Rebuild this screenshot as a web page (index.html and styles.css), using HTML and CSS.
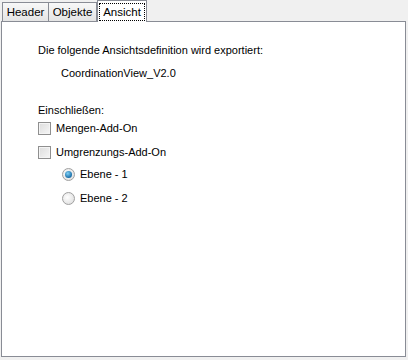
FILE: index.html
```html
<!DOCTYPE html>
<html lang="de">
<head>
    <meta charset="UTF-8">
    <title>Ansicht</title>
    <link rel="stylesheet" href="styles.css">
</head>
<body>
    <div class="tabs">
        <div class="tab">Header</div>
        <div class="tab">Objekte</div>
        <div class="tab active"><span class="focus">Ansicht</span></div>
    </div>

    <div class="panel">
        <p class="info">Die folgende Ansichtsdefinition wird exportiert:</p>
        <p class="view-name">CoordinationView_V2.0</p>

        <p class="include">Einschließen:</p>
        <label class="check"><span class="box"></span>Mengen-Add-On</label>
        <label class="check"><span class="box"></span>Umgrenzungs-Add-On</label>

        <div class="levels">
            <label class="radio"><span class="dot checked"></span>Ebene - 1</label>
            <label class="radio"><span class="dot"></span>Ebene - 2</label>
        </div>
    </div>
</body>
</html>
```

FILE: styles.css
```css
body {
    margin: 0;
    padding: 0;
    width: 408px;
    height: 360px;
    background-color: #f0f0f0;
    font-family: 'Liberation Sans', Arial, sans-serif;
    font-size: 11px;
    color: #000;
}

.tabs {
    display: flex;
    padding-left: 2px;
    height: 21px;
    align-items: flex-end;
}

.tab {
    box-sizing: border-box;
    height: 19px;
    line-height: 18px;
    font-size: 11.5px;
    text-align: center;
    border: 1px solid #898c95;
    border-bottom: none;
    background: linear-gradient(#f8f8f8, #e4e4e4);
    margin-right: -1px;
}

.tab:nth-child(1) {
    width: 47px;
}

.tab:nth-child(2) {
    width: 49px;
}

.tab.active {
    width: 50px;
    height: 22px;
    padding-top: 2px;
    line-height: 16px;
    background: #fff;
    margin-left: 1px;
    margin-bottom: -1px;
    position: relative;
    z-index: 1;
}

.focus {
    display: inline-block;
    border: 1px dotted #000;
    padding: 0 3px;
}

.panel {
    width: 403px;
    height: 334px;
    margin-left: 1px;
    background: #fff;
    border: 1px solid #898c95;
}

.info {
    margin: 22px 0 0 36px;
}

.view-name {
    margin: 11px 0 0 59px;
}

.include {
    margin: 25px 0 0 36px;
}

.check,
.radio {
    display: flex;
    align-items: center;
    height: 24px;
}

.check {
    margin-left: 36px;
}

.levels {
    margin-top: -2px;
}

.radio {
    margin-left: 60px;
}

.box {
    width: 11px;
    height: 11px;
    border: 1px solid #8f8f8f;
    background: linear-gradient(135deg, #dcdcdc, #f6f6f6);
    box-shadow: inset 0 0 0 1px #f4f4f4;
    margin-right: 5px;
}

.dot {
    width: 11px;
    height: 11px;
    border-radius: 50%;
    border: 1px solid #a0a0a0;
    background: radial-gradient(circle at 40% 40%, #fff, #d8d8d8);
    margin-right: 5px;
    position: relative;
}

.dot.checked::after {
    content: "";
    position: absolute;
    left: 2px;
    top: 2px;
    width: 7px;
    height: 7px;
    border-radius: 50%;
    background: radial-gradient(circle at 40% 35%, #7fd0f5, #1a6ea8 70%, #0c4f80);
}
```
